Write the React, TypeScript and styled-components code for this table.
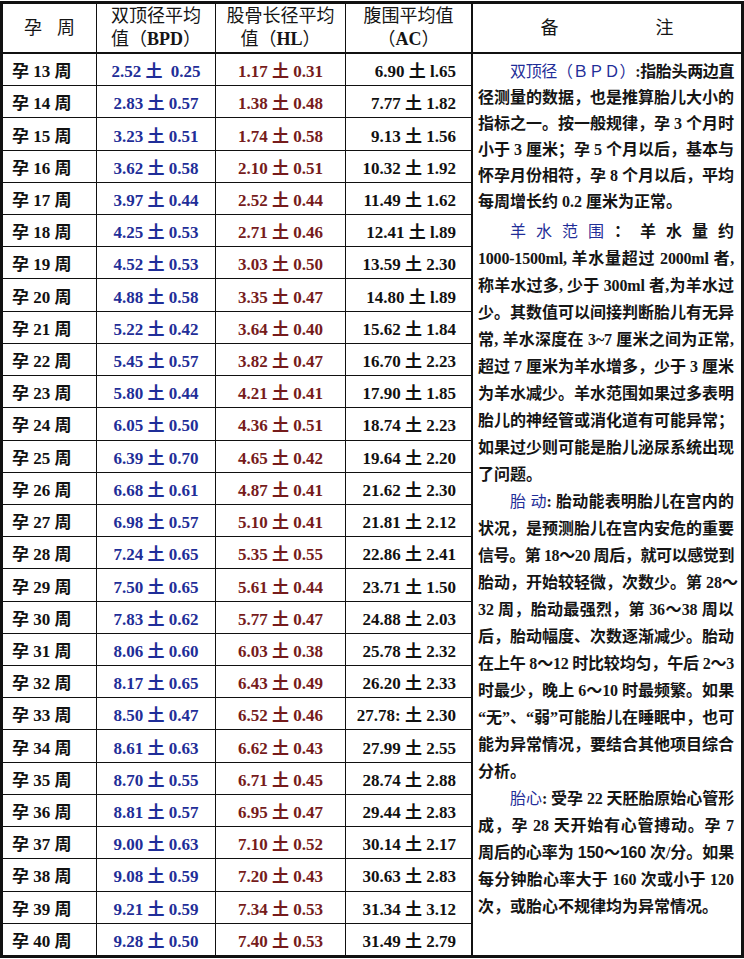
import React from "react";
import styled, { createGlobalStyle } from "styled-components";

const GlobalStyle = createGlobalStyle`
  html, body {
    margin: 0;
    padding: 0;
    background: #ffffff;
  }
  body {
    font-family: "Liberation Serif", "Noto Sans CJK SC", serif;
    color: #111111;
  }
`;

type Row = [number, string, string, string];

const rows: Row[] = [
  [13, "2.52 土\u00a0 0.25", "1.17 土 0.31", "6.90 土 l.65"],
  [14, "2.83 土 0.57", "1.38 土 0.48", "7.77 土 1.82"],
  [15, "3.23 土 0.51", "1.74 土 0.58", "9.13 土 1.56"],
  [16, "3.62 土 0.58", "2.10 土 0.51", "10.32 土 1.92"],
  [17, "3.97 土 0.44", "2.52 土 0.44", "11.49 土 1.62"],
  [18, "4.25 土 0.53", "2.71 土 0.46", "12.41 土 l.89"],
  [19, "4.52 土 0.53", "3.03 土 0.50", "13.59 土 2.30"],
  [20, "4.88 土 0.58", "3.35 土 0.47", "14.80 土 l.89"],
  [21, "5.22 土 0.42", "3.64 土 0.40", "15.62 土 1.84"],
  [22, "5.45 土 0.57", "3.82 土 0.47", "16.70 土 2.23"],
  [23, "5.80 土 0.44", "4.21 土 0.41", "17.90 土 1.85"],
  [24, "6.05 土 0.50", "4.36 土 0.51", "18.74 土 2.23"],
  [25, "6.39 土 0.70", "4.65 土 0.42", "19.64 土 2.20"],
  [26, "6.68 土 0.61", "4.87 土 0.41", "21.62 土 2.30"],
  [27, "6.98 土 0.57", "5.10 土 0.41", "21.81 土 2.12"],
  [28, "7.24 土 0.65", "5.35 土 0.55", "22.86 土 2.41"],
  [29, "7.50 土 0.65", "5.61 土 0.44", "23.71 土 1.50"],
  [30, "7.83 土 0.62", "5.77 土 0.47", "24.88 土 2.03"],
  [31, "8.06 土 0.60", "6.03 土 0.38", "25.78 土 2.32"],
  [32, "8.17 土 0.65", "6.43 土 0.49", "26.20 土 2.33"],
  [33, "8.50 土 0.47", "6.52 土 0.46", "27.78: 土 2.30"],
  [34, "8.61 土 0.63", "6.62 土 0.43", "27.99 土 2.55"],
  [35, "8.70 土 0.55", "6.71 土 0.45", "28.74 土 2.88"],
  [36, "8.81 土 0.57", "6.95 土 0.47", "29.44 土 2.83"],
  [37, "9.00 土 0.63", "7.10 土 0.52", "30.14 土 2.17"],
  [38, "9.08 土 0.59", "7.20 土 0.43", "30.63 土 2.83"],
  [39, "9.21 土 0.59", "7.34 土 0.53", "31.34 土 3.12"],
  [40, "9.28 土 0.50", "7.40 土 0.53", "31.49 土 2.79"],
];

const BLUE = "#1f2e98";
const RED = "#761c1c";

const App: React.FC = () => {
  return (
    <>
      <GlobalStyle />
      <Sheet>
        <HeadCell>
          <Spread $gap={15}>
            <span>孕</span>
            <span>周</span>
          </Spread>
        </HeadCell>
        <HeadCell>
          <HeadText>
            双顶径平均
            <br />
            值（<Abbr>BPD</Abbr>）
          </HeadText>
        </HeadCell>
        <HeadCell>
          <HeadText>
            股骨长径平均
            <br />
            值（<Abbr>HL</Abbr>）
          </HeadText>
        </HeadCell>
        <HeadCell>
          <HeadText>
            腹围平均值
            <br />
            （<Abbr>AC</Abbr>）
          </HeadText>
        </HeadCell>
        <HeadCell $notes>
          <Spread $gap={97}>
            <span>备</span>
            <span>注</span>
          </Spread>
        </HeadCell>

        {rows.map(([week, bpd, hl, ac], i) => (
          <React.Fragment key={week}>
            <WeekCell style={{ gridRow: i + 2 }}>孕 {week} 周</WeekCell>
            <ValueCell $tone={BLUE}>{bpd}</ValueCell>
            <ValueCell $tone={RED}>{hl}</ValueCell>
            <ValueCell $align="right">{ac}</ValueCell>
          </React.Fragment>
        ))}

        <NotesCell>
          <Para $lh={26} $after={3}>
            <Line $indent $squeeze={0.35}>
              <Label>双顶径（ＢＰＤ）</Label>:指胎头两边直
            </Line>
            <Line>径测量的数据，也是推算胎儿大小的</Line>
            <Line>指标之一。按一般规律，孕 3 个月时</Line>
            <Line>小于 3 厘米；孕 5 个月以后，基本与</Line>
            <Line>怀孕月份相符，孕 8 个月以后，平均</Line>
            <Line $last>每周增长约 0.2 厘米为正常。</Line>
          </Para>
          <Para $lh={27}>
            <Line $indent>
              <Label>羊 水 范 围</Label> ： 羊 水 量 约
            </Line>
            <Line $squeeze={0.2}>1000-1500ml, 羊水量超过 2000ml 者,</Line>
            <Line $squeeze={0.1}>称羊水过多, 少于 300ml 者,为羊水过</Line>
            <Line>少。其数值可以间接判断胎儿有无异</Line>
            <Line $squeeze={0.1}>常, 羊水深度在 3~7 厘米之间为正常,</Line>
            <Line>超过 7 厘米为羊水增多，少于 3 厘米</Line>
            <Line>为羊水减少。羊水范围如果过多表明</Line>
            <Line>胎儿的神经管或消化道有可能异常；</Line>
            <Line>如果过少则可能是胎儿泌尿系统出现</Line>
            <Line $last>了问题。</Line>
          </Para>
          <Para $lh={27}>
            <Line $indent>
              <Label>胎 动</Label>: 胎动能表明胎儿在宫内的
            </Line>
            <Line>状况，是预测胎儿在宫内安危的重要</Line>
            <Line $squeeze={0.45}>信号。第 18～20 周后，就可以感觉到</Line>
            <Line>胎动，开始较轻微，次数少。第 28～</Line>
            <Line $squeeze={0.1}>32 周，胎动最强烈，第 36～38 周以</Line>
            <Line>后，胎动幅度、次数逐渐减少。胎动</Line>
            <Line $squeeze={0.3}>在上午 8～12 时比较均匀，午后 2～3</Line>
            <Line $squeeze={0.15}>时最少，晚上 6～10 时最频繁。如果</Line>
            <Line $squeeze={0.15}>“无”、“弱”可能胎儿在睡眠中，也可</Line>
            <Line>能为异常情况，要结合其他项目综合</Line>
            <Line $last>分析。</Line>
          </Para>
          <Para $lh={27}>
            <Line $indent $squeeze={0.2}>
              <Label>胎心</Label>: 受孕 22 天胚胎原始心管形
            </Line>
            <Line>成，孕 28 天开始有心管搏动。孕 7</Line>
            <Line $squeeze={0.2}>
              周后的心率为 <Sans>150～160</Sans> 次/分。如果
            </Line>
            <Line>每分钟胎心率大于 160 次或小于 120</Line>
            <Line $last>次，或胎心不规律均为异常情况。</Line>
          </Para>
        </NotesCell>
      </Sheet>
    </>
  );
};

const Sheet = styled.div`
  display: grid;
  grid-template-columns: 93px 118px 129px 125px minmax(0, 1fr);
  grid-template-rows: 49px repeat(28, minmax(0, 1fr));
  gap: 1px;
  width: 744px;
  height: 957px;
  margin-top: 1px;
  box-sizing: border-box;
  border: 3px solid #111111;
  background: #111111;
  overflow: hidden;
`;

const HeadCell = styled.div<{ $notes?: boolean }>`
  display: flex;
  align-items: center;
  justify-content: center;
  background: #ffffff;
  border-bottom: 1px solid #111111;
  border-left: ${({ $notes }) => ($notes ? "1px solid #111111" : "none")};
  font-size: 18px;
  line-height: 23px;
  font-weight: 400;
  color: #151515;
`;

const HeadText = styled.div`
  text-align: center;
  white-space: nowrap;
`;

const Spread = styled.div<{ $gap: number }>`
  display: flex;
  gap: ${({ $gap }) => $gap}px;
`;

const Abbr = styled.span`
  font-weight: 700;
`;

const WeekCell = styled.div`
  grid-column: 1;
  display: flex;
  align-items: center;
  padding-left: 9px;
  background: #ffffff;
  font-size: 17px;
  font-weight: 700;
  color: #111111;
  white-space: nowrap;
`;

const ValueCell = styled.div<{ $tone?: string; $align?: "center" | "right" }>`
  display: flex;
  align-items: center;
  justify-content: ${({ $align }) => ($align === "right" ? "flex-end" : "center")};
  padding-right: ${({ $align }) => ($align === "right" ? "15px" : "0")};
  background: #ffffff;
  font-size: 17px;
  font-weight: 700;
  color: ${({ $tone }) => $tone ?? "#111111"};
  white-space: nowrap;
`;

const NotesCell = styled.div`
  grid-column: 5;
  grid-row: 2 / span 28;
  min-width: 0;
  background: #ffffff;
  border-left: 1px solid #111111;
  padding: 5px 7px 0 5px;
  font-size: 16px;
  font-weight: 700;
  color: #151515;
`;

const Para = styled.div<{ $lh: number; $after?: number }>`
  line-height: ${({ $lh }) => $lh}px;
  margin-bottom: ${({ $after }) => $after ?? 0}px;
`;

const Line = styled.div<{ $indent?: boolean; $last?: boolean; $squeeze?: number }>`
  white-space: nowrap;
  text-align: justify;
  text-align-last: ${({ $last }) => ($last ? "left" : "justify")};
  text-indent: ${({ $indent }) => ($indent ? "2em" : "0")};
  letter-spacing: ${({ $squeeze }) => ($squeeze ? `-${$squeeze}px` : "normal")};
`;

const Label = styled.span`
  color: ${BLUE};
  font-weight: 400;
`;

const Sans = styled.span`
  font-family: "Liberation Sans", "Noto Sans CJK SC", sans-serif;
`;

export default App;
